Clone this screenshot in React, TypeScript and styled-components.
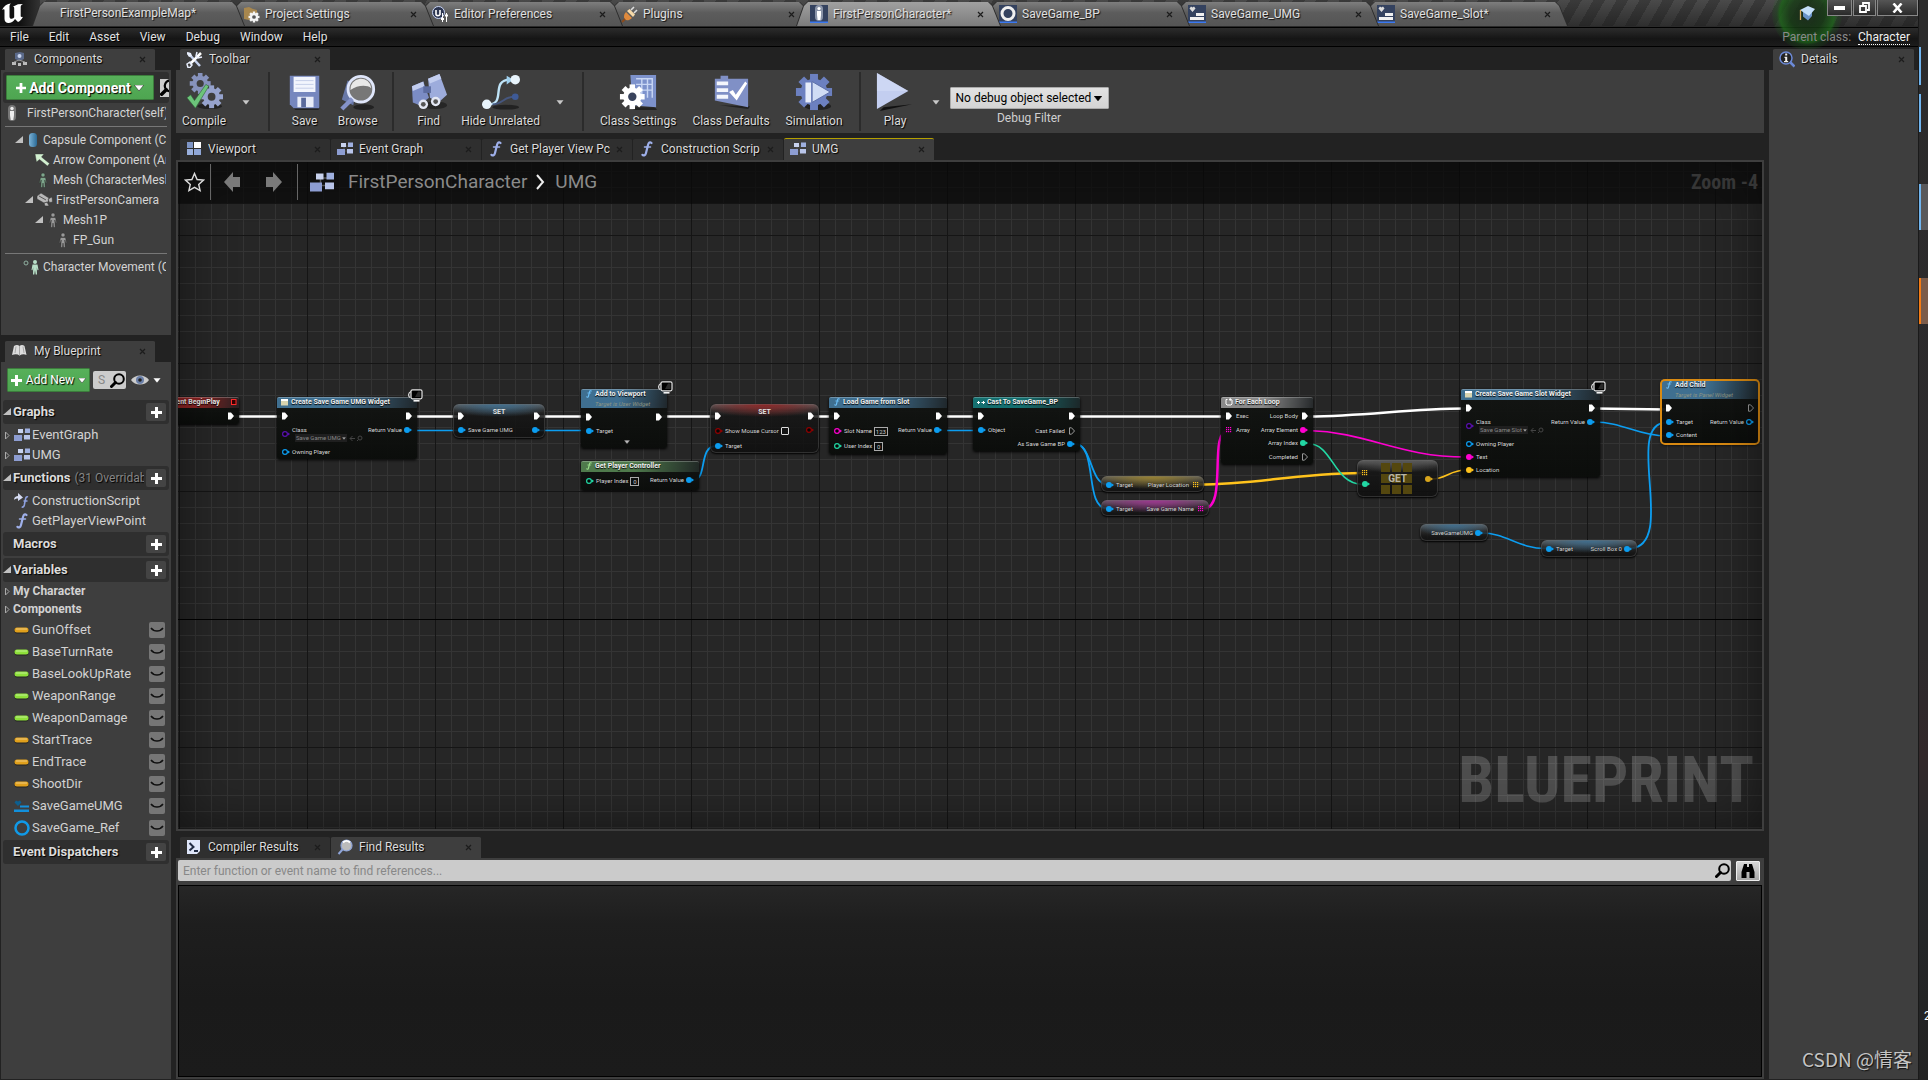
import React from "react";
import styled, { createGlobalStyle, css } from "styled-components";

const UI = `Roboto, "Noto Sans CJK SC", sans-serif`;
const NARROW = `"Roboto Condensed", "Liberation Sans Narrow", Roboto, sans-serif`;

const Global = createGlobalStyle`
  *, *::before, *::after { box-sizing: border-box; }
  body { margin: 0; background: #222; overflow: hidden; font: 12px/16px ${UI}; color: #dcdcdc; }
  button, input, select { font: inherit; color: inherit; margin: 0; padding: 0; border: 0; background: none; }
  svg { display: block; flex: none; }
  a { color: inherit; text-decoration: none; }
`;

/* ---------- frame ---------- */

const Screen = styled.div`
  display: flex;
  height: 100vh;
`;

const Window = styled.div`
  flex: 1;
  min-width: 0;
  display: flex;
  flex-direction: column;
  background: #222;
  border-right: 1px solid #1a1a1a;
`;

const Edge = styled.div`
  width: 9px;
  flex: none;
  display: flex;
  flex-direction: column;
  background: linear-gradient(#2b2b2b 0, #2c2a2c 60%, #32282a 70%, #25282a 80%, #222 100%);
  overflow: hidden;
`;

const EdgeMark = styled.div<{ $gap: number; $size: number; $bar: string; $fill?: string }>`
  margin-top: ${(p) => p.$gap}px;
  height: ${(p) => p.$size}px;
  border-left: 2px solid ${(p) => p.$bar};
  background: ${(p) => p.$fill || "transparent"};
`;

const EdgeText = styled.div`
  margin-top: auto;
  height: 72px;
  padding-left: 5px;
  color: #fff;
  font-size: 12px;
  line-height: 16px;
`;

/* ---------- title bar ---------- */

const TitleBar = styled.header`
  position: relative;
  z-index: 2;
  display: flex;
  height: 27px;
  flex: none;
  padding-top: 2px;
  background:
    linear-gradient(rgba(20, 20, 20, 0) 0, rgba(20, 20, 20, 0.5) 100%),
    repeating-linear-gradient(120deg, #3a3a3a 0 10px, #4a4a4a 10px 20px);
  border-bottom: 1px solid #2a2a2a;
`;

const LogoBox = styled.div`
  width: 40px;
  margin-top: -2px;
  padding: 3px 0 0 1px;
  background: linear-gradient(90deg, #111 50%, #333);
`;

const DocTab = styled.button<{ $active?: boolean; $first?: boolean; $order: number }>`
  position: relative;
  isolation: isolate;
  z-index: ${(p) => (p.$active ? 20 : 10 - p.$order)};
  display: flex;
  align-items: center;
  gap: 5px;
  width: ${(p) => (p.$first ? 213 : 205)}px;
  margin-right: -16px;
  margin-left: ${(p) => (p.$first ? "-8px" : 0)};
  padding: 0 17px ${(p) => (p.$first ? "2px" : 0)} ${(p) => (p.$first ? "28px" : "14px")};
  text-align: left;
  text-shadow: 1px 1px 1px #111;
  color: #e0e0e0;

  &::before, &::after {
    content: "";
    position: absolute;
    z-index: -1;
    inset: 0;
    clip-path: polygon(11px 0, calc(100% - 12px) 0, calc(100% - 8px) 4px, 100% 100%, 0 100%, 7px 4px);
    background: #2c2c2c;
  }
  &::after {
    inset: 0 1px;
    background: ${(p) =>
      p.$active ? "linear-gradient(#a0a0a0, #7c7c7c)" : "linear-gradient(#7e7e7e, #5c5c5c 45%, #555)"};
  }
`;

const TabLabel = styled.span`
  flex: 1;
  min-width: 0;
  overflow: hidden;
  white-space: nowrap;
`;

const GreenGlow = styled.div`
  position: absolute;
  z-index: 0;
  right: 76px;
  top: -22px;
  width: 70px;
  height: 72px;
  border-radius: 50%;
  background: radial-gradient(closest-side, rgba(25, 40, 25, 0.9) 0, rgba(22, 60, 20, 0.8) 50%, rgba(28, 105, 24, 0.75) 78%, rgba(20, 110, 20, 0.25) 86%, rgba(20, 120, 20, 0.08) 100%);
`;

const Tutorial = styled.button`
  position: absolute;
  right: 102px;
  top: 5px;
  z-index: 1;
`;

const WinButtons = styled.div`
  position: relative;
  z-index: 1;
  margin-left: auto;
  margin-top: -2px;
  display: flex;
  height: 16px;
  gap: 1px;
`;

const WinButton = styled.button<{ $w: number }>`
  width: ${(p) => p.$w}px;
  display: grid;
  place-items: center;
  background: linear-gradient(#555, #2a2a2a);
  border: 1px solid #888;
  border-top: 0;
`;

const MenuBar = styled.nav`
  display: flex;
  align-items: center;
  flex: none;
  height: 20px;
  padding: 0 8px 0 10px;
  gap: 20px;
  border-top: 1px solid #000;
  border-bottom: 1px solid #000;
  background: linear-gradient(#2c2c2c, #151515 60%, #1c1c1c);
`;

const MenuItem = styled.button`
  color: #e0e0e0;
  text-shadow: 1px 1px 0 #000;
`;

const ParentClass = styled.span`
  position: relative;
  z-index: 3;
  margin-left: auto;
  color: #8a8a8a;
  & a {
    margin-left: 4px;
    color: #f0f0f0;
    border-bottom: 1px dotted #fff;
  }
`;

/* ---------- docking ---------- */

const Dock = styled.div`
  flex: 1;
  min-height: 0;
  display: flex;
  gap: 5px;
  padding: 1px 0 1px 1px;
`;

const Column = styled.div<{ $w?: number }>`
  display: flex;
  flex-direction: column;
  min-width: 0;
  ${(p) => (p.$w ? css`flex: none; width: ${p.$w}px;` : css`flex: 1;`)}
`;

const TabStrip = styled.div<{ $gap?: number }>`
  display: flex;
  flex: none;
  gap: 1px;
  height: 22px;
  margin-top: ${(p) => p.$gap || 0}px;
  padding: 0 4px;
`;

const PanelTab = styled.button<{ $active?: boolean; $marked?: boolean }>`
  display: flex;
  align-items: center;
  gap: 6px;
  width: 150px;
  min-width: 0;
  padding: 0 9px 1px 6px;
  text-align: left;
  border-top: 1px solid ${(p) => (p.$marked ? "#b5a000" : "transparent")};
  border-radius: 2px 2px 0 0;
  background: ${(p) => (p.$active ? "#3e3e3e" : "#2f2f2f")};
  background-clip: padding-box;
  text-shadow: 1px 1px 1px #000;
  color: #dcdcdc;
`;

const Panel = styled.section<{ $h?: number }>`
  background: #3e3e3e;
  padding: 2px;
  min-height: 0;
  ${(p) => (p.$h ? css`flex: none; height: ${p.$h}px;` : css`flex: 1;`)}
  overflow: hidden;
`;

/* ---------- left column ---------- */

const GreenButton = styled.button<{ $big?: boolean }>`
  display: flex;
  align-items: center;
  justify-content: center;
  flex: none;
  gap: ${(p) => (p.$big ? 3 : 4)}px;
  width: ${(p) => (p.$big ? 148 : 83)}px;
  height: ${(p) => (p.$big ? 25 : 24)}px;
  border: 1px solid #3c7d3c;
  border-radius: 1px;
  background: linear-gradient(#57b05a, #4ea551);
  color: #fff;
  text-shadow: 1px 1px 1px #000;
  ${(p) => p.$big && css`font-weight: 700; font-size: 14px;`}
`;

const AddBar = styled.div`
  display: flex;
  align-items: center;
  gap: 6px;
  height: 31px;
  padding-left: 3px;
  background: #2f2f2f;
  border-radius: 3px;
  overflow: hidden;
`;

const SearchStub = styled.button`
  width: 24px;
  height: 18px;
  flex: none;
  background: #ccc;
  display: flex;
  align-items: center;
`;

const Tree = styled.ul`
  list-style: none;
  margin: 0;
  padding: 0 2px;
`;

const TreeRow = styled.li<{ $indent: number }>`
  display: flex;
  align-items: center;
  gap: 3px;
  height: 20px;
  padding-left: ${(p) => p.$indent}px;
  margin-right: 1px;
  overflow: hidden;
  white-space: nowrap;
  color: #d4d4d4;
`;

const Rule = styled.li`
  height: 1px;
  margin: 3px 0;
  background: #777;
`;

const Filters = styled.div`
  display: flex;
  align-items: center;
  gap: 3px;
  padding: 4px 4px 6px;
`;

const FilterBox = styled.label`
  display: flex;
  align-items: center;
  justify-content: space-between;
  width: 33px;
  height: 18px;
  padding: 0 1px 0 5px;
  border-radius: 2px;
  background: #ccc;
  & input { width: 9px; color: #333; outline: 0; }
  & input::placeholder { color: #888; opacity: 1; }
`;

const EyeMenu = styled.button`
  display: flex;
  align-items: center;
  gap: 4px;
  margin-left: 2px;
`;

const Section = styled.h3`
  display: flex;
  align-items: center;
  gap: 2px;
  height: 24px;
  margin: 2px 0 0;
  padding: 0 3px 0 0;
  border-radius: 3px;
  background: #2f2f2f;
  font-size: 13px;
  font-weight: 700;
  color: #dcdcdc;
  text-shadow: 1px 1px 1px #000;
  white-space: nowrap;
  & small {
    flex: 1;
    min-width: 0;
    overflow: hidden;
    margin-left: 2px;
    font-size: 12px;
    font-weight: 400;
    color: #858585;
  }
`;

const PlusButton = styled.button`
  flex: none;
  margin-left: auto;
  width: 20px;
  height: 18px;
  display: grid;
  place-items: center;
  border-radius: 2px;
  background: #444;
`;

const Item = styled.li<{ $h: number; $bold?: boolean }>`
  display: flex;
  align-items: center;
  gap: 2px;
  height: ${(p) => p.$h}px;
  padding: ${(p) => (p.$bold ? 0 : 2)}px 4px 0 0;
  font-size: ${(p) => (p.$bold ? 12 : 13)}px;
  font-weight: ${(p) => (p.$bold ? 700 : 400)};
  color: #d2d2d2;
  white-space: nowrap;
  & > span { flex: 1; }
`;

const List = styled.ul`
  list-style: none;
  margin: 0;
  padding: 0;
`;

const EyeButton = styled.button`
  width: 16px;
  height: 16px;
  display: grid;
  place-items: center;
  border-radius: 2px;
  background: #767676;
`;

/* ---------- toolbar ---------- */

const ToolbarPanel = styled.section`
  display: flex;
  flex: none;
  height: 63px;
  background: #3e3e3e;
`;

const Tool = styled.button<{ $roomy?: boolean }>`
  display: flex;
  flex-direction: column;
  align-items: center;
  justify-content: space-between;
  min-width: 53px;
  padding: 3px ${(p) => (p.$roomy ? 8 : 6)}px 4px;
  white-space: nowrap;
  text-shadow: 1px 1px 1px #000;
`;

const Drop = styled.button`
  width: 28px;
  padding-top: 2px;
  display: grid;
  place-items: center;
`;

const Divider = styled.div`
  width: 2px;
  margin: 2px 8px;
  background: #2b2b2b;
`;

const DebugField = styled.label`
  display: flex;
  flex-direction: column;
  align-items: center;
  gap: 1px;
  padding-top: 17px;
  color: #d0d0d0;
`;

const SelectWrap = styled.span`
  position: relative;
  & svg { position: absolute; right: 7px; top: 9px; pointer-events: none; }
`;

const DebugSelect = styled.select`
  appearance: none;
  width: 159px;
  height: 22px;
  padding: 0 2px 0 5px;
  border: 1px solid #aaa;
  border-radius: 1px;
  background: linear-gradient(#e2e2e2, #d4d4d4);
  color: #000;
`;

/* ---------- graph ---------- */

const GraphFrame = styled.section`
  flex: none;
  height: 62vh;
  min-height: 671px;
  border: 2px solid #3e3e3e;
  overflow: hidden;
`;

const Graph = styled.div`
  position: relative;
  height: 100%;
  overflow: hidden;
  background-color: #262626;
  background-image:
    linear-gradient(90deg, #151515 1px, transparent 1px),
    linear-gradient(#151515 1px, transparent 1px),
    linear-gradient(90deg, #343434 1px, transparent 1px),
    linear-gradient(#343434 1px, transparent 1px);
  background-size: 128px 128px, 128px 128px, 16px 16px, 16px 16px;
  background-position: 1px 0, 0 73px, 1px 0, 0 9px;
`;

const Vignette = styled.div`
  position: absolute;
  inset: 0;
  pointer-events: none;
  box-shadow: inset 0 0 50px rgba(0, 0, 0, 0.5);
`;

const Axis = styled.div`
  position: absolute;
  left: 0;
  right: 0;
  top: 457px;
  height: 1px;
  background: #000;
`;

const Crumbs = styled.div`
  position: absolute;
  z-index: 3;
  left: 0;
  right: 0;
  top: 0;
  height: 42px;
  display: flex;
  align-items: center;
  padding: 0 4px 2px 6px;
  background: rgba(8, 8, 8, 0.72);
  font-size: 19px;
  color: #8a8a8a;
  & button { flex: none; }
`;

const CrumbRule = styled.span`
  width: 1px;
  height: 36px;
  margin: 0 12px 0 5px;
  background: #666;
`;

const ZoomLabel = styled.strong`
  margin-left: auto;
  font: 700 20px/24px ${NARROW};
  color: #363636;
`;

const Brand = styled.div`
  position: absolute;
  right: 8px;
  bottom: 8px;
  font: 700 64px/80px ${NARROW};
  color: rgba(255, 255, 255, 0.19);
`;

const WireLayer = styled.svg`
  position: absolute;
  left: 0;
  top: 0;
  width: 100%;
  height: 100%;
  fill: none;
`;

type Tint = "red" | "blue" | "teal" | "grey" | "green" | "gold" | "pink" | "none";
const tints: Record<Tint, string> = {
  red: "#8e2424",
  blue: "#3f6f90",
  teal: "#157070",
  grey: "#8a8a8a",
  green: "#4f7a4c",
  gold: "#9a8330",
  pink: "#a03592",
  none: "#555",
};

const NodeBox = styled.article<{ $soft?: boolean; $tint: Tint; $selected?: boolean }>`
  position: absolute;
  display: flex;
  flex-direction: column;
  border-radius: ${(p) => (p.$soft ? 6 : 2)}px;
  font-size: 6px;
  line-height: 8px;
  color: #dcdcdc;
  white-space: nowrap;
  background: linear-gradient(rgba(18, 20, 18, 0.95), rgba(10, 12, 10, 0.95));
  box-shadow: 0 1px 3px #000;
  ${(p) =>
    p.$soft &&
    css`
      background:
        radial-gradient(60% 13px at 50% 0, ${tints[p.$tint]} 0, transparent 100%),
        linear-gradient(rgba(110, 110, 110, 0.85) 0, rgba(50, 50, 50, 0.85) 6px, rgba(22, 22, 22, 0.85) 12px, rgba(14, 14, 14, 0.85));
      box-shadow: 0 1px 2px #000, inset 0 0 0 1px rgba(110, 110, 110, 0.35);
    `}
  ${(p) => p.$selected && css`outline: 2px solid #d98a12; outline-offset: -1px; border-radius: 4px;`}
`;

const NodeHead = styled.header<{ $tint: Tint; $tall?: boolean }>`
  display: flex;
  align-items: flex-start;
  gap: 2px;
  flex: none;
  height: ${(p) => (p.$tall ? 19 : 11)}px;
  padding: 0 2px 0 4px;
  border-radius: 2px 2px 0 0;
  border-top: 1px solid rgba(255, 255, 255, 0.25);
  background: linear-gradient(100deg, ${(p) => tints[p.$tint]} 45%, rgba(30, 34, 36, 0.9) 105%);
  & h4 {
    margin: 0;
    font-size: 7px;
    line-height: 9px;
    font-weight: 700;
    color: #f0f0f0;
    text-shadow: 0 1px 1px #000;
  }
  & em { display: block; color: #8f9684; font-size: 6px; line-height: 9px; }
`;

const StopMark = styled.svg`
  margin-left: auto;
`;

const NodeBody = styled.div<{ $top?: number }>`
  display: flex;
  justify-content: space-between;
  padding: ${(p) => p.$top || 0}px 5px 0;
`;

const PinRow = styled.div<{ $h: number; $right?: boolean }>`
  display: flex;
  flex-direction: ${(p) => (p.$right ? "row-reverse" : "row")};
  align-items: center;
  gap: 2px;
  height: ${(p) => p.$h}px;
  text-shadow: 0 0 1px #000;
`;

const ValueBox = styled.input<{ $w: number }>`
  && {
    width: ${(p) => p.$w}px;
    height: 9px;
    border: 1px solid #aaa;
    text-align: center;
    font-size: 6px;
    line-height: 7px;
    color: #ccc;
  }
`;

const Tick = styled.input`
  && {
    appearance: none;
    width: 8px;
    height: 8px;
    border: 1px solid #ddd;
    border-radius: 1px;
  }
`;

const ClassPick = styled.span`
  display: flex;
  align-items: center;
  gap: 2px;
  margin-left: 3px;
  & button {
    display: flex;
    align-items: center;
    gap: 1px;
    height: 8px;
    padding: 0 1px;
    background: #1f1f1f;
    color: #888;
    font-size: 6px;
    line-height: 8px;
  }
`;

const Caption = styled.h4<{ $mid?: boolean }>`
  position: absolute;
  left: 0;
  right: 0;
  top: ${(p) => (p.$mid ? 12 : 4)}px;
  margin: 0;
  text-align: center;
  font-size: ${(p) => (p.$mid ? 10 : 7)}px;
  line-height: ${(p) => (p.$mid ? 14 : 8)}px;
  color: ${(p) => (p.$mid ? "#b8b4a4" : "#e0e0e0")};
`;

const NodeTop = styled.div`
  position: absolute;
  right: -6px;
  top: -8px;
`;

const MoreArrow = styled.div`
  position: absolute;
  left: 50%;
  bottom: 4px;
`;

const Swatches = styled.div`
  position: absolute;
  left: 24px;
  top: 3px;
  display: grid;
  grid-template-columns: repeat(3, 9px);
  grid-auto-rows: 9px;
  gap: 2px;
  & i { background: #54470f; }
`;

/* ---------- results ---------- */

const SearchRow = styled.div`
  display: flex;
  align-items: center;
  gap: 5px;
  height: 21px;
  margin-bottom: 4px;
  padding-right: 2px;
`;

const SearchBox = styled.label`
  flex: 1;
  display: flex;
  align-items: center;
  height: 21px;
  padding: 0 1px 0 5px;
  border-radius: 2px;
  background: #cbcbcb;
  & input { flex: 1; outline: 0; color: #222; }
  & input::placeholder { color: #888; opacity: 1; }
`;

const SquareButton = styled.button`
  width: 24px;
  height: 20px;
  display: grid;
  place-items: center;
  border: 1px solid #eee;
  border-radius: 1px;
  background: linear-gradient(#d8d8d8, #a8a8a8);
`;

const ResultsPanel = styled.section`
  flex: 1;
  min-height: 0;
  display: flex;
  flex-direction: column;
  padding: 2px;
  background: #3e3e3e;
`;

const Results = styled.div`
  flex: 1;
  border: 1px solid #000;
  background: linear-gradient(#262626, #1e1e1e 20%, #1a1a1a 60%, #1b1b1b);
`;

const Watermark = styled.div`
  margin-top: auto;
  padding: 0 6px 7px 0;
  text-align: right;
  font: 19px/26px "Noto Sans CJK SC", sans-serif;
  color: #c4c4c4;
  text-shadow: 1px 1px 1px #111;
  white-space: nowrap;
`;

const DetailsPanel = styled.section`
  flex: 1;
  min-height: 0;
  display: flex;
  flex-direction: column;
  background: #3e3e3e;
`;

/* ---------- icons ---------- */

const Close = () => (
  <svg width="7" height="7" viewBox="0 0 7 7" stroke="#1c1c1c" strokeWidth="1.2">
    <path d="M1 1l5 5M6 1L1 6" />
  </svg>
);
const Caret = ({ c = "#c8c8c8", w = 8 }: { c?: string; w?: number }) => (
  <svg width={w} height={w / 2 + 1} viewBox="0 0 8 5"><path d="M0 0h8L4 5z" fill={c} stroke="#111" strokeWidth=".4" /></svg>
);
const Plus = ({ s = 11 }: { s?: number }) => (
  <svg width={s} height={s} viewBox="0 0 11 11" fill="#fff"><path d="M4 0h3v4h4v3H7v4H4V7H0V4h4z" /></svg>
);
const Lens = ({ w = 15 }: { w?: number }) => (
  <svg width={w} height={w} viewBox="0 0 15 15" fill="none" stroke="#000"><circle cx="9" cy="6" r="4.800" strokeWidth="2" /><path d="M5.500 9.500L1.500 13.500" strokeWidth="3" strokeLinecap="round" /></svg>
);
const Expanded = () => <svg width="8" height="8" viewBox="0 0 8 8"><path d="M8 0v7H0z" fill="#c0c0c0" /></svg>;
const Collapsed = () => <svg width="8" height="9" viewBox="0 0 8 9"><path d="M2.500 1v7l3.500-3.500z" fill="none" stroke="#aaa" /></svg>;
const Blank = ({ w = 8 }: { w?: number }) => <svg width={w} height="8" />;

const Logo = () => (
  <svg width="24" height="22" viewBox="0 0 24 22" fill="#fff">
    <path d="M1 7C3 3 6 1 10 0.600C8.500 1.500 8.500 3 8.500 4v9.500c0 1.800 1.200 2.500 2.300 2.300c1.100-.2 2-.9 2.400-1.500V5c0-.8-.5-1.200-1.500-1.200L17 1.200L22 1c-2 1-2.300 2-2.300 3.200v8.600c0 1.300.8 1.400 2.300.9c-1.200 2.700-3 4.300-5 5.300l-3-3c-1.600 2.700-4.300 4.200-7 4c-2.600-.3-3.500-2-3.500-4.500V7.600C3.500 6 2.500 6 1 7z" />
  </svg>
);
const GraphIcon = ({ w = 16 }: { w?: number }) => (
  <svg width={w} height={(w * 14) / 16} viewBox="0 0 16 14">
    <path d="M4 4h8M5 9h8M7 2v8" stroke="#555" />
    <rect x="4" y="1" width="5" height="4" fill="#c8d2ee" /><rect x="11" y="0.500" width="5" height="4.500" fill="#9fb0e0" />
    <rect x="0" y="7" width="8" height="6" fill="#8d9dd2" /><rect x="10" y="7" width="6" height="4.500" fill="#b9c5ea" />
  </svg>
);
const ViewportIcon = () => (
  <svg width="16" height="14" viewBox="0 0 16 14"><path d="M1 0h6v6H1z" fill="#7f96c6" /><path d="M8 0h7v6H8z" fill="#fff" /><path d="M1 7h6v6H1z" fill="#9ab0dc" /><path d="M8 7h7v6H8z" fill="#8fa6d6" /></svg>
);
const FnIcon = ({ c = "#9fb0ea", w = 16 }: { c?: string; w?: number }) => (
  <svg width={w} height={w} viewBox="0 0 16 16" fill="none" stroke={c} strokeLinecap="round"><path d="M12.500 2C11 .7 9.600 1.500 9 4L7 12c-.6 2.500-2 3-3.500 1.800" strokeWidth="2.200" /><path d="M5.500 6h6" strokeWidth="1.500" /></svg>
);
const CtorIcon = () => (
  <svg width="17" height="16" viewBox="0 0 17 16" fill="none"><path d="M1 7c0-3 2-4 4-4V0l5 4.500L5 8V5.500C3 5.500 2 6 1 7z" fill="#d6dcf2" /><path d="M15 4c-1-.6-2 0-2.400 1.600L11.300 12c-.5 2-1.300 2.600-2.600 1.800M10.500 8h4" stroke="#8fa2e0" strokeWidth="1.600" /></svg>
);
const Person = ({ c = "#9a9a9a", w = 14 }: { c?: string; w?: number }) => (
  <svg width={w} height="16" viewBox="0 0 14 16" fill={c} stroke="#222" strokeWidth=".4"><circle cx="7" cy="3" r="2" /><path d="M4.500 5.500h5l1.200 5.500-1 .2L8.800 8l.4 7.500H7.500L7 11l-.5 4.500H4.800L5.200 8l-.9 3.200-1-.2z" /></svg>
);
const Pawn = () => (
  <svg width="14" height="16" viewBox="0 0 14 16"><rect x="3" y="0" width="8" height="16" rx="4" fill="#777" /><circle cx="7" cy="3.500" r="1.700" fill="#eee" /><path d="M5 6h4v4l-.7 5H5.700L5 10z" fill="#eee" /></svg>
);
const Capsule = () => (
  <svg width="14" height="16" viewBox="0 0 14 16"><defs><linearGradient id="cap"><stop stopColor="#7db4d8" /><stop offset="1" stopColor="#2a6a96" /></linearGradient></defs><rect x="3" y="1" width="8" height="14" rx="3.500" fill="url(#cap)" /></svg>
);
const ArrowComp = () => <svg width="16" height="16" viewBox="0 0 16 16"><path d="M1 2h9L7.500 5l8 6.500-2 2.500-8-6.500L2.500 10z" fill="#d2f0d0" stroke="#333" strokeWidth=".4" /></svg>;
const CameraComp = () => <svg width="17" height="16" viewBox="0 0 17 16" fill="#b8b8b8" stroke="#333" strokeWidth=".5"><path d="M1 4l4-3 8 5-1 4-4 1-7-4zM12 7l4-2 .5 5-3 .5zM8 11l3-1 2 4H9z" /><path d="M3 4l7 4" stroke="#555" strokeWidth="1" /></svg>;
const MoveComp = () => <svg width="17" height="16" viewBox="0 0 17 16"><circle cx="3" cy="4" r="2" fill="none" stroke="#8fb0a0" /><circle cx="12" cy="3" r="2" fill="#b8e0c8" /><path d="M9.500 5.500h5l1 5.500-1 .2-.7-3 .2 7.300h-1.300L12 11l-.7 4.500H10l.2-7.300-.7 3-1-.2z" fill="#b8e0c8" /></svg>;
const ComponentsIcon = () => <svg width="17" height="16" viewBox="0 0 17 16"><path d="M4 2l5-1 4 1v6l-4 2-5-2z" fill="#5b6a8a" /><circle cx="8.500" cy="5" r="2" fill="#c8d4ee" /><path d="M1 11h4v3H1zM12 11h4v3h-4zM7 12h3v3H7z" fill="#bbb" /><path d="M3 11l5-2 6 2" stroke="#999" fill="none" /></svg>;
const BookIcon = () => <svg width="17" height="14" viewBox="0 0 17 14"><path d="M3 2c2-1.500 4-1.500 5.500 0 1.500-1.500 3.500-1.500 5 0l2 9c-2-1-4.500-1-7 .5C6.500 10 4 10 1 11z" fill="#ddd" /><path d="M8.500 2v9.500M5 2.500L4 9M12 2.500l1 6.500" stroke="#999" strokeWidth=".8" /></svg>;
const Wrench = () => <svg width="17" height="17" viewBox="0 0 17 17"><path d="M2 2l12 13" stroke="#c6d2ee" strokeWidth="2.500" /><path d="M15 2L4 13" stroke="#fff" strokeWidth="2.500" /><path d="M1 1l4 1 1 3-3 1-2-3z" fill="#e8eefc" /><path d="M11 1l-1 4 2 2 4-1M1 13l3-2 2 3-2 2.500H2z" stroke="#e8eefc" strokeWidth="1.500" fill="none" /></svg>;
const InfoIcon = () => <svg width="16" height="17" viewBox="0 0 16 17"><circle cx="7" cy="7" r="6" fill="#222" stroke="#6c8ad8" strokeWidth="1.500" /><path d="M11.500 11.500l4 4" stroke="#6c8ad8" strokeWidth="2.500" /><path d="M6.200 2.500h2v2h-2zM5.500 5.800h2.700v4.200h1v1.200H5v-1.200h1.200V7h-.7z" fill="#eee" /></svg>;
const ScriptIcon = () => <svg width="16" height="16" viewBox="0 0 16 16"><path d="M1 1h13v11l-3 3H1z" fill="#dfe6fa" /><path d="M3.500 4l4 4-4 3.500M8 12h4" stroke="#222c44" strokeWidth="2" fill="none" /></svg>;
const FindIcon = () => <svg width="16" height="16" viewBox="0 0 16 16"><circle cx="9.500" cy="6.500" r="5.500" fill="#bbb" stroke="#8ea4d8" strokeWidth="1.200" /><path d="M6 3.500c2-2 5-2 7 0" stroke="#fff" strokeWidth="2" fill="none" /><path d="M5.500 10.500L1.500 15" stroke="#8ea4d8" strokeWidth="2" /></svg>;
const FolderGear = () => <svg width="17" height="17" viewBox="0 0 17 17"><path d="M1 2l5-1 4 2 4 1v8l-8 2-5-1z" fill="#a8874e" /><GearPath cx={11} cy={11} r={5.500} fill="#f4f4f4" hole="#555" /></svg>;
const PrefIcon = () => <svg width="17" height="17" viewBox="0 0 17 17"><circle cx="6.500" cy="6.500" r="6" fill="#2c3550" stroke="#c8d4f4" /><path d="M4 4v4.500c0 1.500 3.500 1.500 4 0V4" stroke="#fff" strokeWidth="1.600" fill="none" /><path d="M10.500 7v9M14.500 7v9" stroke="#fff" /><path d="M9 13h3M13 9.500h3" stroke="#fff" strokeWidth="2" /></svg>;
const PlugIcon = () => <svg width="17" height="17" viewBox="0 0 17 17"><path d="M5 6l6 6c-3 3-6 2.500-7 1.500S2 9 5 6z" fill="#e08a3c" /><path d="M6 5l6 6 2-2.500L8.500 3z" fill="#f6d9a8" /><path d="M10 4l3-3M13 7l3-3" stroke="#ddd" strokeWidth="1.600" /><path d="M4 13L1 16" stroke="#8a4a1c" strokeWidth="2" /></svg>;
const TabThumb = ({ kind }: { kind: "pawn" | "ring" | "umg" }) => (
  <svg width="18" height="18" viewBox="0 0 18 18">
    <rect width="18" height="18" fill="#34425f" /><rect y="16.500" width="18" height="1.500" fill="#3a78f0" />
    {kind === "ring" && <circle cx="9" cy="8.500" r="6" fill="none" stroke="#f0f0f0" strokeWidth="3" />}
    {kind === "pawn" && <><rect x="5" y="0" width="8" height="16" rx="4" fill="#8a94a8" /><circle cx="9" cy="3.500" r="1.600" fill="#fff" /><path d="M7 6h4v4l-.6 5H7.600L7 10z" fill="#fff" /></>}
    {kind === "umg" && <><path d="M4.500 7L1.500 3.500 3 1.500l1.500 1L6 1.500 7.500 3.500z" fill="#ddd" /><path d="M8 8h8v3H8zM2 12h14v3H2z" fill="#f0f0f0" /></>}
  </svg>
);
const UmgIcon = () => <svg width="15" height="13" viewBox="0 0 15 13"><path d="M4 6L0.500 2.500 2 .5l2 1 2-1 1.500 2z" fill="#0d5f8f" /><path d="M6 5.500h9v2H6zM0 9.500h15v2.500H0z" fill="#1290dc" /></svg>;
const RefIcon = () => <svg width="16" height="16" viewBox="0 0 16 16"><circle cx="8" cy="8" r="6.500" fill="none" stroke="#109ae8" strokeWidth="2.500" /></svg>;
const Pill = ({ c }: { c: string }) => <svg width="15" height="7" viewBox="0 0 15 7"><rect x=".5" y="1" width="14" height="5.500" rx="2.500" fill="#222" /><rect x=".5" y=".5" width="14" height="5" rx="2.500" fill={c} /><path d="M2 2h11" stroke="#fff" strokeOpacity=".45" /></svg>;
const Eye = () => <svg width="18" height="12" viewBox="0 0 18 12"><path d="M0 6C4 0 14 0 18 6 14 12 4 12 0 6z" fill="#ccc" /><circle cx="9" cy="6" r="4" fill="#6a7fa8" /><circle cx="9" cy="6" r="1.800" fill="#222" /></svg>;
const Lid = () => <svg width="14" height="6" viewBox="0 0 14 6"><path d="M1 1c3 4 9 4 12 0" fill="none" stroke="#111" strokeWidth="1.500" /></svg>;
const Binoculars = () => <svg width="14" height="14" viewBox="0 0 14 14"><path d="M3 0h3v3h2V0h3l2.500 8v6H8.500V8h-3v6H.5V8z" /></svg>;
const Monitor = () => <svg width="15" height="13" viewBox="0 0 15 13"><path d="M3 2.500C0 4 0 7 2 8.500" stroke="#ddd" strokeWidth="1.200" fill="none" /><rect x="3" y=".8" width="11" height="9" rx="1.500" fill="#000" stroke="#e4e4e4" strokeWidth="1.200" /><path d="M10 2.500h2.500V8H7z" fill="#2a2a2a" /><path d="M5.500 11.800h6" stroke="#f4f4f4" strokeWidth="1.600" /></svg>;

function GearPath({ cx, cy, r, fill, hole = "#3e3e3e" }: { cx: number; cy: number; r: number; fill: string; hole?: string }) {
  return (
    <g transform={`translate(${cx} ${cy})`} fill={fill}>
      {[0, 45, 90, 135].map((a) => <rect key={a} x={-r * 0.22} y={-r} width={r * 0.44} height={r * 2} transform={`rotate(${a})`} />)}
      <circle r={r * 0.74} /><circle r={r * 0.34} fill={hole} />
    </g>
  );
}

const toolArt: Record<string, React.ReactNode> = {
  Compile: <><ellipse cx="26" cy="35" rx="13" ry="3" fill="#222" /><GearPath cx={16} cy={11} r={11} fill="#8793bd" /><GearPath cx={28} cy={25} r={12} fill="#96a3cd" /><path d="M2 26l4-3 4 6L22 12l3 2-14 23z" fill="#6cc47a" stroke="#2c5c34" strokeWidth=".6" /></>,
  Save: <><path d="M7 36h29l-2 3H10z" fill="#222" /><path d="M4 3h31v34H8l-4-4z" fill="#7687be" /><path d="M8 4h23v16H8z" fill="#f2f5fd" /><path d="M10 8h19M10 12h19M10 16h19" stroke="#c4cee8" /><path d="M12 25h17v11H12z" fill="#e8ecf8" /><path d="M16 26h5v10h-5z" fill="#5a6a9c" /></>,
  Browse: <><path d="M3 28l6-20 10 4-4 22z" fill="#6878a8" /><ellipse cx="26" cy="36" rx="11" ry="3" fill="#222" /><circle cx="23" cy="17" r="13.500" fill="#777" stroke="#dfe6fa" strokeWidth="3" /><path d="M12 18a11 11 0 0 1 22-2c-5-4-15-3-22 2z" fill="#e8e8e8" /><path d="M14 27L3 38" stroke="#8492c8" strokeWidth="4.500" /></>,
  Find: <><ellipse cx="26" cy="34" rx="13" ry="4" fill="#262626" /><path d="M2 14l12-5 6 17-10 8-7-3z" fill="#7b8cc4" /><path d="M19 6l12-5 8 22-9 8-9-5z" fill="#9dacdc" /><path d="M2 14l12-5 1 5-12 5zM19 6l12-5 2 5-12 5z" fill="#c2cdef" /><path d="M14 14h8v7h-8z" fill="#5c6ca0" /><circle cx="14" cy="33" r="5" fill="#e4e8f4" /><circle cx="14" cy="33" r="2.500" fill="#555" /><circle cx="27" cy="30" r="5" fill="#e4e8f4" /><circle cx="27" cy="30" r="2.500" fill="#555" /></>,
  "Hide Unrelated": <><ellipse cx="25" cy="36" rx="14" ry="2.500" fill="#222" /><path d="M7 33C26 33 8 7 30 7" stroke="#bfe4f8" strokeWidth="2.500" fill="none" /><path d="M26 3l7 4-7 5z" fill="#9fd0ee" /><path d="M11 33c10 0 12-8 23-8" stroke="#46577f" strokeWidth="2" fill="none" /><circle cx="5" cy="33" r="5" fill="#e8f4fc" /><circle cx="35" cy="7" r="5" fill="#e8f4fc" /><circle cx="35" cy="25" r="3.500" fill="#3e5a96" /></>,
  "Class Settings": <><path d="M12 36h26l2 3H16z" fill="#222" /><path d="M12 2h27v34l-25-2z" fill="#7d92cc" /><path d="M18 6h17v20M18 12h17M18 18h17M24 6v20M30 6v20" stroke="#c8d6f4" strokeWidth="1.500" fill="none" /><GearPath cx={14} cy={25} r={13} fill="#fff" hole="#38425c" /></>,
  "Class Defaults": <><path d="M8 34l30 4 2-3z" fill="#222" /><path d="M3 6h6V3h8v3h21v30L3 29z" fill="#8090c6" /><path d="M5 9h12v4H5zM5 16h12v4H5zM5 23h12v4H5z" fill="#f4f6fc" /><path d="M18 20l4-2 3 5L35 9l2 2-11 18z" fill="#fff" /></>,
  Simulation: <><ellipse cx="24" cy="35" rx="14" ry="4" fill="#222" /><GearPath cx={20} cy={20} r={19} fill="#6c80c0" hole="#6c80c0" /><path d="M11 10h6v21h-6z" fill="#e6ecfa" /><path d="M18 9l19 11-19 11z" fill="#d0dcf4" stroke="#5a6ca4" /></>,
  Play: <><path d="M4 40l34-7-30 3z" fill="#111" /><path d="M1 0l33 19L1 38z" fill="#c3cef0" /><path d="M1 0l33 19H1z" fill="#d8e0f8" fillOpacity=".5" /></>,
};
const ToolButton = ({ name, roomy }: { name: string; roomy?: boolean }) => (
  <Tool $roomy={roomy}><svg width="38" height="38" viewBox="0 0 40 40">{toolArt[name]}</svg>{name}</Tool>
);

/* ---------- graph data ---------- */

const BLUE = "#0c9df0";
const PINK = "#ff00d0";
const GOLD = "#ffc31c";
const MINT = "#22d8a4";
type PinKind = "exec" | "execOpen" | "dot" | "ring" | "array";
type PinDef = { h: number; kind: PinKind; c?: string; label?: string; value?: string; tick?: boolean; pick?: string };
type NodeDef = {
  x: number; y: number; w: number; h: number; tint: Tint; title?: string; sub?: string; icon?: "fn" | "widget" | "cast" | "loop" | "none";
  soft?: boolean; top?: number; caption?: string; monitor?: boolean; more?: boolean; selected?: boolean; get?: boolean; stop?: boolean;
  left: PinDef[]; right: PinDef[];
};
const ex = (h = 16, label?: string): PinDef => ({ h, kind: "exec", label });

const nodes: NodeDef[] = [
  { x: -13, y: 235, w: 74, h: 27, tint: "red", title: "Event BeginPlay", icon: "none", stop: true, left: [], right: [ex()] },
  { x: 99, y: 235, w: 140, h: 62, tint: "blue", title: "Create Save Game UMG Widget", icon: "widget", monitor: true,
    left: [ex(), { h: 20, kind: "ring", c: "#5a10b0", label: "Class", pick: "Save Game UMG" }, { h: 16, kind: "ring", c: BLUE, label: "Owning Player" }],
    right: [ex(), { h: 12, kind: "dot", c: BLUE, label: "Return Value" }] },
  { x: 275, y: 242, w: 92, h: 34, tint: "blue", soft: true, top: 4, caption: "SET",
    left: [ex(), { h: 12, kind: "dot", c: BLUE, label: "Save Game UMG" }], right: [ex(), { h: 12, kind: "dot", c: BLUE }] },
  { x: 403, y: 227, w: 86, h: 59, tint: "blue", title: "Add to Viewport", sub: "Target is User Widget", icon: "fn", monitor: true, more: true,
    left: [ex(18), { h: 10, kind: "dot", c: BLUE, label: "Target" }], right: [ex(18)] },
  { x: 403, y: 299, w: 118, h: 29, tint: "green", title: "Get Player Controller", icon: "fn",
    left: [{ h: 18, kind: "ring", c: MINT, label: "Player Index", value: "0" }], right: [{ h: 16, kind: "dot", c: BLUE, label: "Return Value" }] },
  { x: 532, y: 242, w: 109, h: 49, tint: "red", soft: true, top: 4, caption: "SET",
    left: [ex(), { h: 14, kind: "ring", c: "#8e0000", label: "Show Mouse Cursor", tick: true }, { h: 16, kind: "dot", c: BLUE, label: "Target" }],
    right: [ex(), { h: 12, kind: "ring", c: "#8e0000" }] },
  { x: 651, y: 235, w: 118, h: 57, tint: "blue", title: "Load Game from Slot", icon: "fn",
    left: [ex(), { h: 14, kind: "ring", c: PINK, label: "Slot Name", value: "123" }, { h: 16, kind: "ring", c: MINT, label: "User Index", value: "0" }],
    right: [ex(), { h: 12, kind: "dot", c: BLUE, label: "Return Value" }] },
  { x: 795, y: 235, w: 107, h: 54, tint: "teal", title: "Cast To SaveGame_BP", icon: "cast",
    left: [ex(), { h: 12, kind: "dot", c: BLUE, label: "Object" }],
    right: [ex(), { h: 14, kind: "execOpen", label: "Cast Failed" }, { h: 12, kind: "dot", c: BLUE, label: "As Save Game BP" }] },
  { x: 923, y: 314, w: 103, h: 16, tint: "gold", soft: true,
    left: [{ h: 18, kind: "dot", c: BLUE, label: "Target" }], right: [{ h: 18, kind: "array", c: GOLD, label: "Player Location" }] },
  { x: 923, y: 338, w: 108, h: 16, tint: "pink", soft: true,
    left: [{ h: 18, kind: "dot", c: BLUE, label: "Target" }], right: [{ h: 18, kind: "array", c: PINK, label: "Save Game Name" }] },
  { x: 1043, y: 235, w: 92, h: 67, tint: "grey", title: "For Each Loop", icon: "loop",
    left: [ex(16, "Exec"), { h: 12, kind: "array", c: PINK, label: "Array" }],
    right: [ex(16, "Loop Body"), { h: 12, kind: "dot", c: PINK, label: "Array Element" }, { h: 14, kind: "dot", c: MINT, label: "Array Index" }, { h: 14, kind: "execOpen", label: "Completed" }] },
  { x: 1179, y: 298, w: 81, h: 37, tint: "none", soft: true, top: 7, caption: "GET", get: true,
    left: [{ h: 12, kind: "array", c: GOLD }, { h: 10, kind: "dot", c: MINT }], right: [{ h: 24, kind: "dot", c: "#d8a51c" }] },
  { x: 1283, y: 227, w: 139, h: 88, tint: "blue", title: "Create Save Game Slot Widget", icon: "widget", monitor: true,
    left: [ex(), { h: 20, kind: "ring", c: "#5a10b0", label: "Class", pick: "Save Game Slot" }, { h: 16, kind: "ring", c: BLUE, label: "Owning Player" },
      { h: 10, kind: "dot", c: PINK, label: "Text" }, { h: 16, kind: "dot", c: GOLD, label: "Location" }],
    right: [ex(), { h: 12, kind: "dot", c: BLUE, label: "Return Value" }] },
  { x: 1483, y: 218, w: 98, h: 64, tint: "blue", title: "Add Child", sub: "Target is Panel Widget", icon: "fn", selected: true,
    left: [ex(18), { h: 10, kind: "dot", c: BLUE, label: "Target" }, { h: 16, kind: "dot", c: BLUE, label: "Content" }],
    right: [{ h: 18, kind: "execOpen" }, { h: 10, kind: "ring", c: BLUE, label: "Return Value" }] },
  { x: 1242, y: 362, w: 68, h: 17, tint: "blue", soft: true, left: [], right: [{ h: 18, kind: "dot", c: BLUE, label: "SaveGameUMG" }] },
  { x: 1363, y: 378, w: 96, h: 17, tint: "blue", soft: true,
    left: [{ h: 18, kind: "dot", c: BLUE, label: "Target" }], right: [{ h: 18, kind: "dot", c: BLUE, label: "Scroll Box 0" }] },
];

const wires: [string, string, number][] = [
  ["M56 254.500H104", "#fff", 2.5], ["M234 254.500H280", "#fff", 2.5], ["M360 254.500H408", "#fff", 2.5],
  ["M483 254.500H538", "#fff", 2.5], ["M636 254.500H656", "#fff", 2.5], ["M763 254.500H800", "#fff", 2.5], ["M897 254.500H1050", "#fff", 2.5],
  ["M1130 254.500C1190 254 1230 246.500 1288 246.500", "#fff", 2.5], ["M1416 246.500L1488 247.500", "#fff", 2.5],
  ["M234 268.500H280", BLUE, 1.5], ["M360 268.500H408", BLUE, 1.5], ["M763 268.500H800", BLUE, 1.5],
  ["M515 318C530 318 520 284 538 284", BLUE, 1.8],
  ["M897 282C914 282 912 322 929 322.500", BLUE, 1.8], ["M897 282C920 282 906 346.500 929 346.500", BLUE, 1.8],
  ["M1020 322.500C1080 322.500 1110 312 1184 311", GOLD, 2.5],
  ["M1026 346.500C1050 346 1030 269 1050 268.500", PINK, 2.5],
  ["M1130 268.500C1190 270 1220 295 1288 295", PINK, 1.6],
  ["M1130 281.500C1155 282 1155 321 1184 322.500", MINT, 1.6],
  ["M1254 317C1268 317 1272 308 1288 308", GOLD, 1.6],
  ["M1416 260C1445 260 1460 274 1488 274", BLUE, 1.6],
  ["M1304 371C1328 371 1340 386.500 1368 386.500", BLUE, 1.6],
  ["M1452 386.500C1500 384 1445 262 1488 260.500", BLUE, 1.8],
];

function Pin({ kind, c = "#fff", right }: { kind: PinKind; c?: string; right?: boolean }) {
  const o = right ? 2 : 0;
  return (
    <svg width="8" height="8" viewBox="0 0 8 8">
      {kind === "exec" && <path d={`M${o} .5h3l3 3.500-3 3.500h-3z`} fill="#fff" />}
      {kind === "execOpen" && <path d={`M${o + 0.5} .8h2l3 3.200-3 3.200h-2z`} fill="none" stroke="#bbb" strokeWidth=".8" />}
      {kind === "dot" && <><circle cx="3" cy="4" r="3" fill={c} /><path d="M6 2.500L8 4 6 5.500z" fill={c} /></>}
      {kind === "ring" && <><circle cx="3" cy="4" r="2.400" fill="#060606" stroke={c} strokeWidth="1.200" /><path d="M6 2.500L8 4 6 5.500z" fill={c} /></>}
      {kind === "array" && [0, 2, 4].map((i) => [0, 2, 4].map((j) => <rect key={`${i}${j}`} x={o + i} y={1 + j} width="1.200" height="1.200" fill={c} />))}
    </svg>
  );
}

function PinLine({ pin, right }: { pin: PinDef; right?: boolean }) {
  return (
    <PinRow $h={pin.h} $right={right}>
      <Pin kind={pin.kind} c={pin.c} right={right} />
      {pin.pick ? (
        <div>
          {pin.label}
          <ClassPick>
            <button>{pin.pick}<Caret w={4} c="#aaa" /></button>
            <svg width="14" height="7" viewBox="0 0 14 7" fill="none" stroke="#444"><path d="M1 3.500h5M3.500 1L1 3.500 3.500 6" /><circle cx="11" cy="3" r="2" /><path d="M9.500 4.500L8 6" /></svg>
          </ClassPick>
        </div>
      ) : (
        <span>{pin.label}</span>
      )}
      {pin.value && <ValueBox $w={pin.value.length > 1 ? 14 : 9} defaultValue={pin.value} aria-label={pin.label} />}
      {pin.tick && <Tick type="checkbox" aria-label={pin.label} />}
    </PinRow>
  );
}

function HeadIcon({ icon, tint }: { icon?: string; tint: Tint }) {
  if (icon === "fn") return <FnIcon w={8} c={tint === "green" ? "#9be08a" : "#6cc0f8"} />;
  if (icon === "widget") return <svg width="8" height="8" viewBox="0 0 8 8"><rect x="0" y="1" width="7" height="6.500" fill="#d8d4b0" /><rect x="0" y="1" width="7" height="2" fill="#fff" /></svg>;
  if (icon === "cast") return <svg width="8" height="8" viewBox="0 0 8 8" fill="none" stroke="#fff"><path d="M0 4.500h3M4.500 4.500H8M1.500 3v3M6 3l1.500 1.500L6 6" /></svg>;
  if (icon === "loop") return <svg width="8" height="8" viewBox="0 0 8 8" fill="none" stroke="#fff"><path d="M2.500 1.500H1v4.500l1 1h4l1-1V2l-1-.5H4.500L5.500 0M4.500 1.500L5.500 3" /></svg>;
  return null;
}

function GraphNode({ n }: { n: NodeDef }) {
  return (
    <NodeBox $soft={n.soft} $tint={n.tint} $selected={n.selected} style={{ left: n.x, top: n.y, width: n.w, height: n.h }}>
      {n.title && (
        <NodeHead $tint={n.tint} $tall={!!n.sub}>
          <HeadIcon icon={n.icon} tint={n.tint} />
          <div><h4>{n.title}</h4>{n.sub && <em>{n.sub}</em>}</div>
          {n.stop && <StopMark width="6" height="8" viewBox="0 0 6 8"><rect x=".5" y="1.500" width="4.500" height="5" fill="#300" stroke="#ff2a2a" /></StopMark>}
        </NodeHead>
      )}
      {n.get && <Swatches>{Array.from({ length: 9 }, (_, i) => <i key={i} />)}</Swatches>}
      {n.caption && <Caption $mid={n.get}>{n.caption}</Caption>}
      <NodeBody $top={n.top}>
        <div>{n.left.map((p, i) => <PinLine key={i} pin={p} />)}</div>
        <div>{n.right.map((p, i) => <PinLine key={i} pin={p} right />)}</div>
      </NodeBody>
      {n.monitor && <NodeTop><Monitor /></NodeTop>}
      {n.more && <MoreArrow><Caret w={6} c="#bbb" /></MoreArrow>}
    </NodeBox>
  );
}

/* ---------- page ---------- */

const docTabs: [string, React.ReactNode][] = [
  ["FirstPersonExampleMap*", null],
  ["Project Settings", <FolderGear />],
  ["Editor Preferences", <PrefIcon />],
  ["Plugins", <PlugIcon />],
  ["FirstPersonCharacter*", <TabThumb kind="pawn" />],
  ["SaveGame_BP", <TabThumb kind="ring" />],
  ["SaveGame_UMG", <TabThumb kind="umg" />],
  ["SaveGame_Slot*", <TabThumb kind="umg" />],
];

const graphTabs: [string, React.ReactNode][] = [
  ["Viewport", <ViewportIcon />],
  ["Event Graph", <GraphIcon />],
  ["Get Player View Pc", <FnIcon />],
  ["Construction Scrip", <FnIcon />],
  ["UMG", <GraphIcon />],
];

const variables: [string, React.ReactNode][] = [
  ["GunOffset", <Pill c="#e0a01c" />],
  ["BaseTurnRate", <Pill c="#8ee03a" />],
  ["BaseLookUpRate", <Pill c="#8ee03a" />],
  ["WeaponRange", <Pill c="#8ee03a" />],
  ["WeaponDamage", <Pill c="#8ee03a" />],
  ["StartTrace", <Pill c="#e0a01c" />],
  ["EndTrace", <Pill c="#e0a01c" />],
  ["ShootDir", <Pill c="#e0a01c" />],
  ["SaveGameUMG", <UmgIcon />],
  ["SaveGame_Ref", <RefIcon />],
];

const IconCell = styled.i`
  display: grid;
  place-items: center;
  width: 17px;
`;

function Tab({ label, icon, active, marked }: { label: string; icon: React.ReactNode; active?: boolean; marked?: boolean }) {
  return <PanelTab $active={active} $marked={marked}>{icon}<TabLabel>{label}</TabLabel><Close /></PanelTab>;
}

export default function App() {
  return (
    <Screen>
      <Global />
      <Window>
        <TitleBar>
          <LogoBox><Logo /></LogoBox>
          {docTabs.map(([label, icon], i) => (
            <DocTab key={label} $order={i} $first={i === 0} $active={i === 4}>
              {icon}<TabLabel>{label}</TabLabel>{i > 0 && <Close />}
            </DocTab>
          ))}
          <GreenGlow />
          <Tutorial aria-label="Tutorials">
            <svg width="17" height="17" viewBox="0 0 17 17"><path d="M4 6l9-1v6l-4 4.500-5-4z" fill="#6a92c8" /><path d="M1 5l8-4 7 3-6 7z" fill="#c4defa" /><path d="M1.500 5v10" stroke="#d8a860" strokeWidth="1.300" /></svg>
          </Tutorial>
          <WinButtons>
            <WinButton $w={25} aria-label="Minimise"><svg width="11" height="4"><rect width="11" height="4" fill="#fff" /></svg></WinButton>
            <WinButton $w={23} aria-label="Restore"><svg width="11" height="11" viewBox="0 0 11 11" fill="none" stroke="#fff" strokeWidth="1.800"><path d="M1 4h6v6H1zM4 3V1h6v7H8" /></svg></WinButton>
            <WinButton $w={41} aria-label="Close"><svg width="11" height="10" viewBox="0 0 11 10" stroke="#fff" strokeWidth="2.600"><path d="M1.500 0.500l8 9M9.500 .5l-8 9" /></svg></WinButton>
          </WinButtons>
        </TitleBar>
        <MenuBar>
          {["File", "Edit", "Asset", "View", "Debug", "Window", "Help"].map((m) => <MenuItem key={m}>{m}</MenuItem>)}
          <ParentClass>Parent class: <a href="#character">Character</a></ParentClass>
        </MenuBar>

        <Dock>
          <Column $w={170}>
            <TabStrip><Tab active label="Components" icon={<ComponentsIcon />} /></TabStrip>
            <Panel $h={265}>
              <AddBar>
                <GreenButton $big><Plus s={10} />Add Component<Caret c="#fff" w={10} /></GreenButton>
                <SearchStub aria-label="Search components"><Lens w={17} /></SearchStub>
              </AddBar>
              <Tree>
                <TreeRow $indent={0}><Pawn /><Blank w={2} />FirstPersonCharacter(self)</TreeRow>
                <Rule />
                <TreeRow $indent={10}><Expanded /><Capsule />Capsule Component (CapsuleComponent)</TreeRow>
                <TreeRow $indent={29}><ArrowComp />Arrow Component (Arrow)</TreeRow>
                <TreeRow $indent={31}><Person c="#7ea68c" />Mesh (CharacterMesh0)</TreeRow>
                <TreeRow $indent={20}><Expanded /><CameraComp />FirstPersonCamera</TreeRow>
                <TreeRow $indent={30}><Expanded /><Person />Mesh1P</TreeRow>
                <TreeRow $indent={51}><Person />FP_Gun</TreeRow>
                <Rule />
                <TreeRow $indent={18}><MoveComp />Character Movement (CharMoveComp)</TreeRow>
              </Tree>
            </Panel>
            <TabStrip $gap={5}><Tab active label="My Blueprint" icon={<BookIcon />} /></TabStrip>
            <Panel>
              <Filters>
                <GreenButton><Plus />Add New<Caret c="#fff" /></GreenButton>
                <FilterBox><input placeholder="S" aria-label="Search" /><Lens /></FilterBox>
                <EyeMenu aria-label="View options"><Eye /><Caret c="#fff" /></EyeMenu>
              </Filters>
              <Section><Expanded />Graphs<PlusButton aria-label="Add graph"><Plus /></PlusButton></Section>
              <List>
                <Item $h={20}><Collapsed /><IconCell><GraphIcon /></IconCell><span>EventGraph</span></Item>
                <Item $h={20}><Collapsed /><IconCell><GraphIcon /></IconCell><span>UMG</span></Item>
              </List>
              <Section><Expanded />Functions<small>(31 Overridable)</small><PlusButton aria-label="Add function"><Plus /></PlusButton></Section>
              <List>
                <Item $h={20}><Blank /><IconCell><CtorIcon /></IconCell><span>ConstructionScript</span></Item>
                <Item $h={20}><Blank /><IconCell><FnIcon /></IconCell><span>GetPlayerViewPoint</span></Item>
              </List>
              <Section><Blank />Macros<PlusButton aria-label="Add macro"><Plus /></PlusButton></Section>
              <Section><Expanded />Variables<PlusButton aria-label="Add variable"><Plus /></PlusButton></Section>
              <List>
                <Item $h={18} $bold><Collapsed /><span>My Character</span></Item>
                <Item $h={18} $bold><Collapsed /><span>Components</span></Item>
                {variables.map(([name, icon]) => (
                  <Item key={name} $h={22}><Blank /><IconCell>{icon}</IconCell><span>{name}</span><EyeButton aria-label={`Show ${name}`}><Lid /></EyeButton></Item>
                ))}
              </List>
              <Section><Blank />Event Dispatchers<PlusButton aria-label="Add dispatcher"><Plus /></PlusButton></Section>
            </Panel>
          </Column>

          <Column>
            <TabStrip><Tab active label="Toolbar" icon={<Wrench />} /></TabStrip>
            <ToolbarPanel>
              <ToolButton name="Compile" />
              <Drop aria-label="Compile options"><Caret /></Drop>
              <Divider />
              <ToolButton name="Save" />
              <ToolButton name="Browse" />
              <Divider />
              <ToolButton name="Find" />
              <ToolButton name="Hide Unrelated" />
              <Drop aria-label="Hide options"><Caret /></Drop>
              <Divider />
              <ToolButton name="Class Settings" roomy />
              <ToolButton name="Class Defaults" roomy />
              <ToolButton name="Simulation" roomy />
              <Divider />
              <ToolButton name="Play" />
              <Drop aria-label="Play options"><Caret /></Drop>
              <DebugField>
                <SelectWrap>
                  <DebugSelect><option>No debug object selected</option></DebugSelect>
                  <Caret c="#000" />
                </SelectWrap>
                Debug Filter
              </DebugField>
            </ToolbarPanel>

            <TabStrip $gap={5}>
              {graphTabs.map(([label, icon], i) => <Tab key={label} label={label} icon={icon} active={i === 4} marked={i === 4} />)}
            </TabStrip>
            <GraphFrame>
              <Graph>
                <Axis />
                <Brand>BLUEPRINT</Brand>
                <WireLayer>
                  {wires.map(([d, c, w], i) => <path key={i} d={d} stroke={c} strokeWidth={w} />)}
                </WireLayer>
                {nodes.map((n, i) => <GraphNode key={i} n={n} />)}
                <Vignette />
                <Crumbs>
                  <button aria-label="Favourite"><svg width="21" height="21" viewBox="0 0 21 21"><path d="M10.500 1.500l2.600 6 6.400.6-4.800 4.300 1.400 6.300-5.600-3.300-5.600 3.300 1.400-6.300L1.500 8.100l6.400-.6z" fill="none" stroke="#ddd" strokeWidth="1.400" /></svg></button>
                  <CrumbRule />
                  <button aria-label="Back"><svg width="18" height="22" viewBox="0 0 18 22"><path d="M1 11L10 1v5h7v10h-7v5z" fill="#7a7a7a" /></svg></button>
                  <Blank w={24} />
                  <button aria-label="Forward"><svg width="18" height="22" viewBox="0 0 18 22"><path d="M17 11L8 1v5H1v10h7v5z" fill="#7a7a7a" /></svg></button>
                  <Blank w={9} />
                  <CrumbRule />
                  <GraphIcon w={24} />
                  <Blank w={14} />
                  FirstPersonCharacter
                  <Blank w={9} />
                  <svg width="9" height="16" viewBox="0 0 9 16" fill="none" stroke="#eee" strokeWidth="2"><path d="M1 1l6 7-6 7" /></svg>
                  <Blank w={10} />
                  UMG
                  <ZoomLabel>Zoom -4</ZoomLabel>
                </Crumbs>
              </Graph>
            </GraphFrame>

            <TabStrip $gap={5}>
              <Tab label="Compiler Results" icon={<ScriptIcon />} />
              <Tab label="Find Results" icon={<FindIcon />} active />
            </TabStrip>
            <ResultsPanel>
              <SearchRow>
                <SearchBox><input placeholder="Enter function or event name to find references..." aria-label="Find references" /><Lens /></SearchBox>
                <SquareButton aria-label="Find in all blueprints"><Binoculars /></SquareButton>
              </SearchRow>
              <Results />
            </ResultsPanel>
          </Column>

          <Column $w={149}>
            <TabStrip><Tab active label="Details" icon={<InfoIcon />} /></TabStrip>
            <DetailsPanel><Watermark>CSDN @情客</Watermark></DetailsPanel>
          </Column>
        </Dock>
      </Window>
      <Edge>
        <EdgeMark $gap={47} $size={38} $bar="#6fb4ee" />
        <EdgeMark $gap={9} $size={38} $bar="#6fb4ee" />
        <EdgeMark $gap={52} $size={46} $bar="#6fb4ee" $fill="#58585a" />
        <EdgeMark $gap={48} $size={46} $bar="#f57c14" $fill="#7c5c4a" />
        <EdgeText>2</EdgeText>
      </Edge>
    </Screen>
  );
}
